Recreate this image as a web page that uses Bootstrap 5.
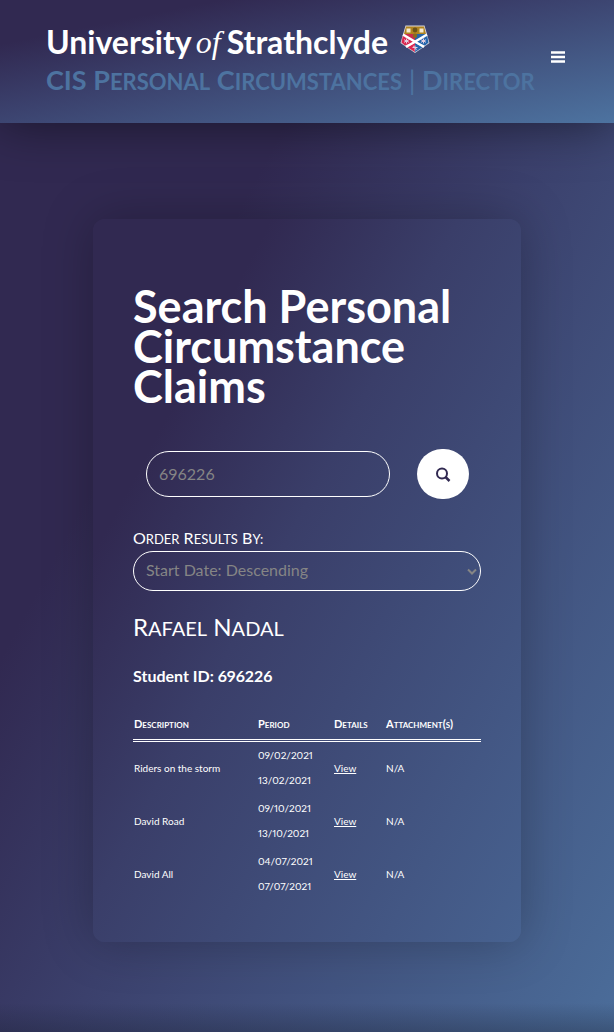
<!DOCTYPE html>
<html lang="en">
<head>
<meta charset="utf-8">
<meta name="viewport" content="width=device-width, initial-scale=1">
<title>CIS Personal Circumstances | Director</title>
<link href="https://cdn.jsdelivr.net/npm/bootstrap@5.3.0/dist/css/bootstrap.min.css" rel="stylesheet">
<style>
:root { --ink: #312951; --blue: #4d73a0; }
body { font-family: Lato, "Open Sans", sans-serif; color: #fff; background: var(--ink); font-variant-numeric: proportional-nums; }
.site-header { background: linear-gradient(to bottom right, var(--ink) 18%, #3b416d 45%, var(--blue)); box-shadow: 0 0 50px rgba(0,0,0,.5); padding: 20px 46px 25px; position: relative; }
.brand { font-size: 32px; line-height: 44px; font-weight: 700; color: #fff; }
.brand-of { font-family: "Liberation Serif", serif; font-style: italic; font-weight: 400; margin: 0 6px 0 4px; }
.crest { width: 30px; height: 29px; margin: 0 0 6px 12px; }
.subtitle { font-size: 27px; line-height: 32px; font-weight: 700; color: var(--blue); }
.caps { font-variant: small-caps; }
/* capitals drawn a little larger than the browser's synthetic small caps */
.cw { display: inline-block; text-transform: uppercase; line-height: inherit; }
.subtitle .cw { font-size: 22px; }
.subtitle .cw::first-letter { font-size: 27px; }
.order-label .cw { font-size: 13px; }
.order-label .cw::first-letter { font-size: 16px; }
.student .cw { font-size: 20px; }
.student .cw::first-letter { font-size: 24px; }
.menu-btn { width: 20px; height: 24px; margin-top: 25px; }
.page-main { background: linear-gradient(to top, rgba(20,25,40,.3), transparent 30px), linear-gradient(118deg, var(--ink) 26%, #3b406c 50%, #4b6d9a); padding: 96px 93px 91px; }
.panel { background: linear-gradient(118deg, var(--ink) 22%, #3a3e69 45%, #476290); border-radius: 12px; box-shadow: 0 0 50px rgba(0,0,0,.25); padding: 67px 40px 41px; }
.title { font-size: 45px; line-height: 40px; font-weight: 700; }
.pill { background: transparent; border: 1px solid #fff; border-radius: 24px; color: #858585; font-size: 16px; padding: 0 12px 2px; }
.pill::placeholder { color: #858585; }
.search-row { gap: 27px; margin: 43px 12px 27px 13px; }
.search-box { height: 46px; min-width: 0; }
.search-btn { width: 52px; height: 50px; background: #fff; border-radius: 26px; color: var(--ink); }
.order-wrap { position: relative; }
.order { height: 40px; appearance: none; }
.order-arrow { position: absolute; right: 4px; top: 17px; pointer-events: none; }
.order-label { font-size: 16px; line-height: 24px; }
.student { font-size: 24px; line-height: 32px; font-weight: 400; margin-top: 20px; }
.student-id { font-size: 16px; line-height: 24px; font-weight: 700; margin-top: 20px; }
.claims { font-size: 10px; line-height: 25px; margin-top: 23px; table-layout: fixed; }
.claims th { font-weight: 700; padding: 0 1px 3px; font-size: 11px; }
.claims td { padding: 1px 1px 2px; }
.claims thead { border-bottom: 3px double #fff; }
.c-desc { width: 124px; } .c-period { width: 76px; } .c-details { width: 52px; }
</style>
</head>
<body>
<header class="site-header d-flex align-items-start justify-content-between">
  <div>
    <a href="#" class="brand text-decoration-none d-flex align-items-center"><span>University</span><span class="brand-of">of</span><span>Strathclyde</span>
      <svg class="crest" viewBox="0 0 30 29" aria-hidden="true">
        <path d="M5.500.500h19L29.500 18 15 28 .5 18z" fill="#d8d5da"/>
        <path d="M6 1.500h18l2 7.500H4z" fill="#b1841f"/>
        <path d="M4 9h11v7L3 11z" fill="#c92b4c"/>
        <path d="M26 9H15v7l12-5z" fill="#2564a8"/>
        <path d="M2.800 11L14 17 5 20.500 1.500 17.500z" fill="#dc2850"/>
        <path d="M27.200 11L16 17l9 3.500 3.500-3z" fill="#2466ad"/>
        <path d="M15 18l-8 4 8 5z" fill="#dc2850"/>
        <path d="M15 18l8 4-8 5z" fill="#2466ad"/>
        <path d="M3 9.500L24 22M27 9.500L6 22" stroke="#fff" stroke-width="2.200"/>
        <path d="M6.500 3.500h4v4h-4zM19.500 3.500h4v4h-4z" fill="#f4e9d2"/>
        <circle cx="15" cy="5" r="2.400" fill="#6b5218"/>
        <circle cx="15" cy="10.800" r="2.200" fill="#8a6a20"/>
        <path d="M6.500 13.500v5M4 14.700l5 2.600M9 14.700l-5 2.600M23.500 13.500v5M21 14.700l5 2.600M26 14.700l-5 2.600M12.500 22.500h5M15 20.500v5M13.200 21l3.600 3.500" stroke="#e3cfe0" stroke-width="1"/>
      </svg></a>
    <div class="subtitle text-nowrap">CIS <span class="cw">Personal</span> <span class="cw">Circumstances</span> <span class="fw-normal">|</span> <span class="cw">Director</span></div>
  </div>
  <button type="button" class="menu-btn btn border-0 p-0 d-flex align-items-center justify-content-center" aria-label="Menu">
    <svg width="14" height="12" viewBox="0 0 14 12"><path d="M0 1.500h14M0 6h14M0 10.500h14" stroke="#fff" stroke-width="2.400"/></svg>
  </button>
</header>
<main class="page-main">
  <section class="panel">
    <h1 class="title mb-0">Search Personal Circumstance Claims</h1>
    <form>
      <div class="search-row d-flex align-items-center">
        <input type="text" class="pill search-box flex-grow-1" placeholder="696226" aria-label="Student ID">
        <button type="button" class="search-btn btn border-0 p-0 flex-shrink-0 d-flex align-items-center justify-content-center" aria-label="Search">
          <svg width="15" height="15" viewBox="0 0 15 15" fill="none" stroke="currentColor" stroke-width="2"><circle cx="6" cy="6.500" r="5"/><path d="M9.500 10l4 4" stroke-width="2.500"/></svg>
        </button>
      </div>
      <label for="order" class="order-label d-block"><span class="cw">Order</span> <span class="cw">Results</span> <span class="cw">By:</span></label>
      <div class="order-wrap">
        <select id="order" class="pill order w-100"><option>Start Date: Descending</option><option>Start Date: Ascending</option></select>
        <svg class="order-arrow" width="10" height="8" viewBox="0 0 10 8"><path d="M1 1.500l4 4 4-4" fill="none" stroke="#858585" stroke-width="2"/></svg>
      </div>
    </form>
    <h2 class="student mb-0"><span class="cw">Rafael</span> <span class="cw">Nadal</span></h2>
    <p class="student-id mb-0">Student ID: 696226</p>
    <table class="claims w-100">
      <colgroup><col class="c-desc"><col class="c-period"><col class="c-details"><col></colgroup>
      <thead class="caps"><tr><th>Description</th><th>Period</th><th>Details</th><th>Attachment(s)</th></tr></thead>
      <tbody>
        <tr><td>Riders on the storm</td><td>09/02/2021<br>13/02/2021</td><td><a href="#" class="text-white">View</a></td><td>N/A</td></tr>
        <tr><td>David Road</td><td>09/10/2021<br>13/10/2021</td><td><a href="#" class="text-white">View</a></td><td>N/A</td></tr>
        <tr><td>David All</td><td>04/07/2021<br>07/07/2021</td><td><a href="#" class="text-white">View</a></td><td>N/A</td></tr>
      </tbody>
    </table>
  </section>
</main>
<script src="https://cdn.jsdelivr.net/npm/bootstrap@5.3.0/dist/js/bootstrap.bundle.min.js"></script>
</body>
</html>
